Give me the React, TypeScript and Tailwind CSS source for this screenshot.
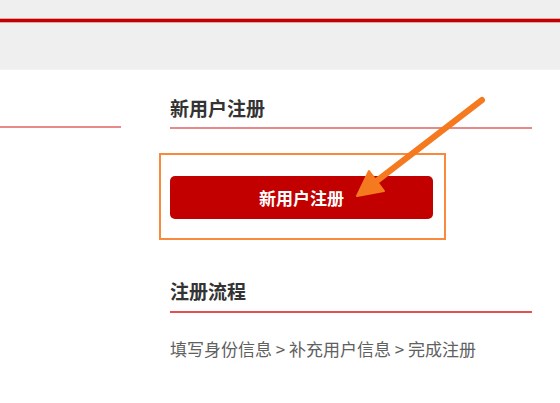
import React from "react";

export default function App() {
  return (
    <div
      className="relative w-[560px] h-[403px] bg-white overflow-hidden"
      style={{ fontFamily: '"Noto Sans CJK SC", "Noto Sans", sans-serif' }}
    >
      <div className="h-[70px] bg-[#efefef] pt-[18px] border-b border-[#f4f4f4]">
        <div className="h-[5px] bg-[#c00000] border-y border-[#e7a3a3]" />
      </div>
      <div className="flex">
        <div className="w-[121px] pt-[56px]">
          <div className="h-[2px] bg-[#e88a8a]" />
        </div>
        <div className="ml-[49px] w-[362px]">
          <div className="pt-[24px] pb-[5px] border-b-2 border-[#e38a8a]">
            <h2 className="text-[19px] leading-[28px] font-bold text-[#333]">新用户注册</h2>
          </div>
          <div className="mt-[24px] -ml-[11px] w-[287px] h-[87px] border-2 border-[#f98a3c] pt-[21px] pl-[9px]">
            <button className="w-[263px] h-[43px] rounded-[5px] bg-[#c20000] text-white text-[17px] font-semibold flex items-center justify-center">
              新用户注册
            </button>
          </div>
          <div className="pt-[37px] pb-[6px] border-b-2 border-[#e25050]">
            <h2 className="text-[19px] leading-[28px] font-bold text-[#333]">注册流程</h2>
          </div>
          <p className="mt-[24px] text-[17px] leading-[24px] text-[#606060]">
            填写身份信息 &gt; 补充用户信息 &gt; 完成注册
          </p>
        </div>
      </div>
      <svg
        className="absolute left-0 top-0 pointer-events-none"
        width="560"
        height="403"
        viewBox="0 0 560 403"
      >
        <line x1="482" y1="100" x2="374" y2="183" stroke="#f57a1f" strokeWidth="6" strokeLinecap="round" />
        <polygon points="357,196 384,191 369,171" fill="#f57a1f" stroke="#f57a1f" strokeWidth="2" strokeLinejoin="round" />
      </svg>
    </div>
  );
}
